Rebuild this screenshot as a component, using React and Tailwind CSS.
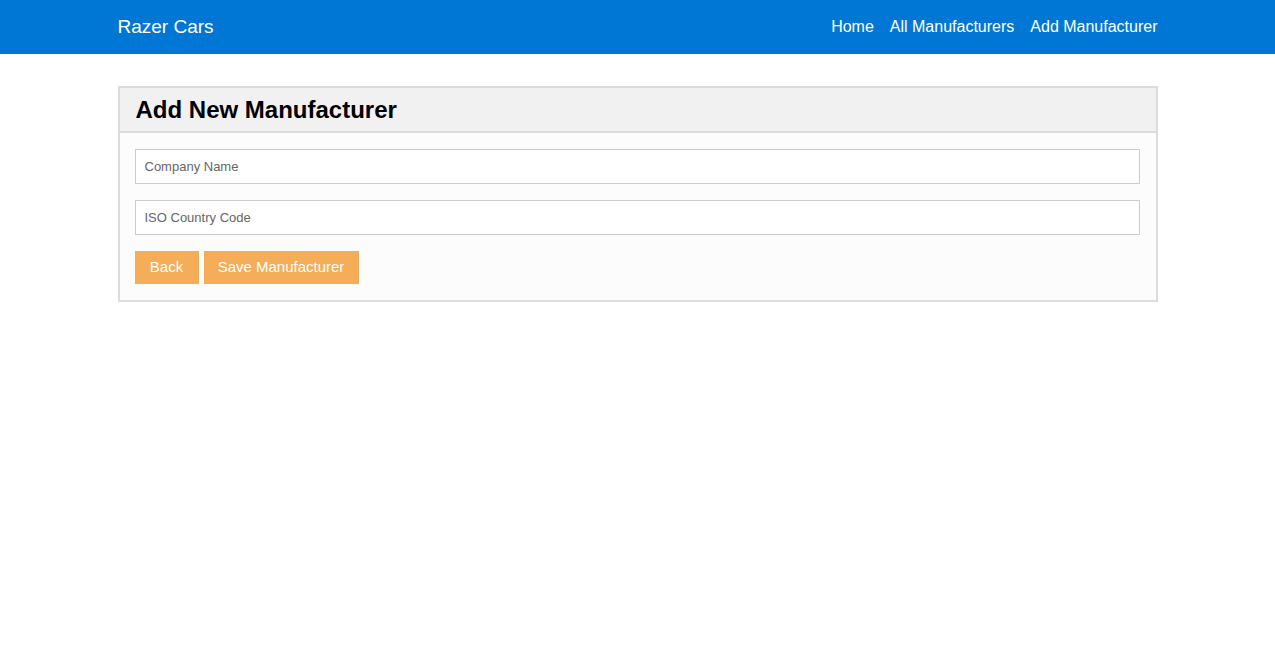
import React from 'react'

const App = () => {
  return (
    <div className="min-h-screen bg-white font-['Liberation_Sans',Arial,sans-serif]">
      <nav className="h-[54px] bg-[#0077d4]">
        <div className="mx-auto flex h-full w-[1040px] items-center justify-between">
          <a href="#" className="text-[19px] text-white">Razer Cars</a>
          <div className="flex items-center gap-4 text-[16px] text-white">
            <a href="#">Home</a>
            <a href="#">All Manufacturers</a>
            <a href="#">Add Manufacturer</a>
          </div>
        </div>
      </nav>

      <div className="mx-auto mt-8 w-[1040px]">
        <div className="border-2 border-[#dcdcdc]">
          <div className="flex h-[45px] items-center border-b-2 border-[#dcdcdc] bg-[#f1f1f1] px-4">
            <h1 className="text-[24px] font-bold text-black">Add New Manufacturer</h1>
          </div>
          <div className="flex flex-col gap-4 bg-[#fcfcfc] py-4 pl-[15px] pr-4">
            <input
              type="text"
              placeholder="Company Name"
              className="h-[35px] w-full border border-[#cccccc] bg-white px-[9px] text-[13px] text-[#555] placeholder-[#666] outline-none"
            />
            <input
              type="text"
              placeholder="ISO Country Code"
              className="h-[35px] w-full border border-[#cccccc] bg-white px-[9px] text-[13px] text-[#555] placeholder-[#666] outline-none"
            />
            <div className="flex gap-[5px]">
              <button className="h-[33px] w-[64px] bg-[#f5ad57] text-[15px] text-white">Back</button>
              <button className="h-[33px] w-[155px] bg-[#f5ad57] text-[15px] text-white">Save Manufacturer</button>
            </div>
          </div>
        </div>
      </div>
    </div>
  )
}

export default App
